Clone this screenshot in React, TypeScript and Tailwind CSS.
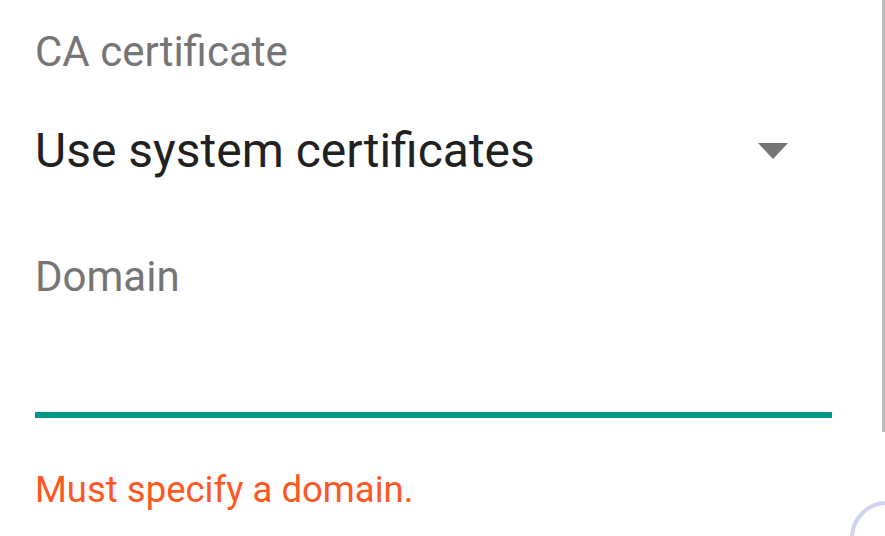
export default function App() {
  return (
    <div className="relative w-[885px] h-[536px] overflow-hidden bg-white font-['Roboto',sans-serif]">
      <div className="flex flex-col pl-[35px] pt-[28px]">
        <div className="text-[42px] leading-[48px] text-[#757575]">CA certificate</div>

        <div className="mt-[47px] flex h-[56px] w-[797px] items-center justify-between">
          <span className="text-[48px] leading-[56px] text-[#212121]">Use system certificates</span>
          <svg width="30" height="16" viewBox="0 0 30 16" className="mr-[44px]">
            <polygon points="0,0 30,0 15,16" fill="#757575" />
          </svg>
        </div>

        <div className="mt-[74px] text-[42px] leading-[48px] text-[#757575]">Domain</div>

        <div className="mt-[111px] h-[6px] w-[797px] bg-[#009688]" />

        <div className="mt-[51px] text-[36.5px] leading-[42px] text-[#ff5722]">Must specify a domain.</div>
      </div>

      {/* scrollbar */}
      <div className="absolute right-0 top-0 h-[432px] w-[3px] bg-[#bdbdbd]" />

      {/* loading ring peeking in the corner */}
      <svg className="absolute right-0 bottom-0" width="40" height="40" viewBox="0 0 40 40">
        <circle cx="42" cy="42" r="35" fill="none" stroke="#cfd3ef" strokeWidth="4" />
      </svg>
    </div>
  );
}
